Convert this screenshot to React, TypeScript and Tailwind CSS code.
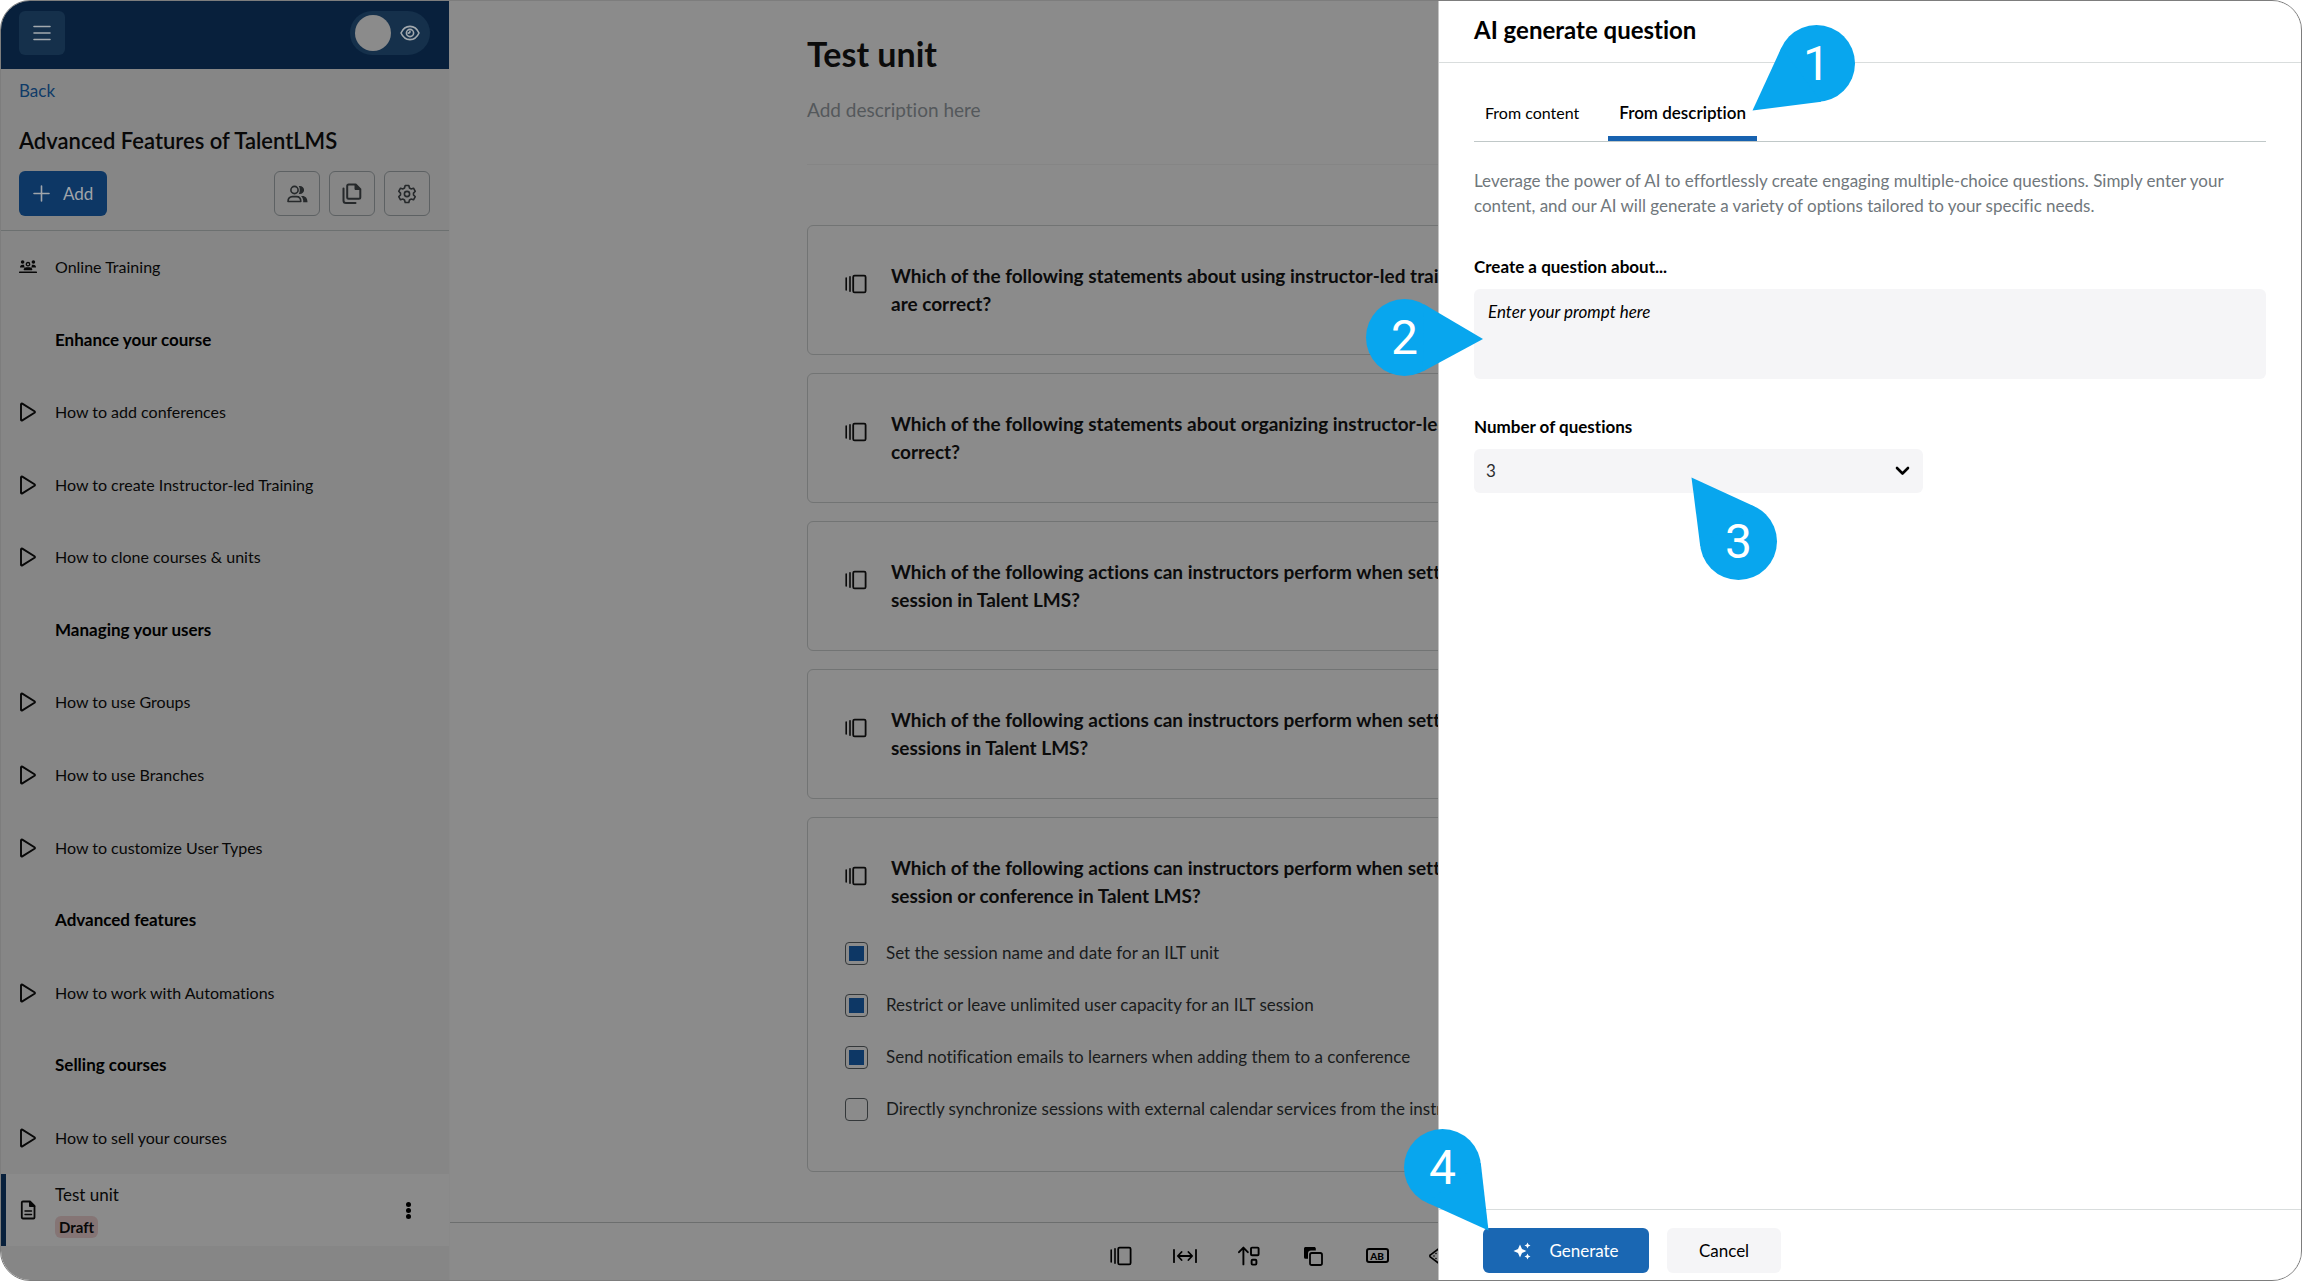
import React, { useState } from "react";

type IconProps = { children: React.ReactNode; w?: number; h?: number; sw?: number };

function Icon({ children, w = 22, h = 20, sw = 1.6 }: IconProps) {
  return (
    <svg
      aria-hidden="true"
      width={w}
      height={h}
      viewBox={`0 0 ${w} ${h}`}
      fill="none"
      stroke="currentColor"
      strokeWidth={sw}
      strokeLinecap="round"
      strokeLinejoin="round"
      className="shrink-0"
    >
      {children}
    </svg>
  );
}

const CardsIcon = () => (
  <Icon>
    <path d="M1.2 4v12M5 2.8v14.4" strokeWidth="1.6" />
    <rect x="8.2" y="1.6" width="12.4" height="16.8" rx="1.4" strokeWidth="1.8" />
  </Icon>
);

const GapIcon = () => (
  <Icon w={24} sw={1.8}>
    <path d="M1 3.8v12.4M23 3.8v12.4M5 10h14M8.6 6 4.8 10l3.8 4M15.4 6l3.8 4-3.8 4" />
  </Icon>
);

const OrderIcon = () => (
  <Icon>
    <path d="M5.4 18.4V2M1 6.2 5.4 1.6l4.4 4.6" strokeWidth="1.9" />
    <rect x="13" y="1.6" width="7.6" height="7.6" rx="1" strokeWidth="1.9" />
    <rect x="13.6" y="13.8" width="4.8" height="4.8" rx="1" strokeWidth="1.9" />
  </Icon>
);

const MatchIcon = () => (
  <Icon w={20}>
    <path
      d="M2.6 1h8.6c.9 0 1.6.7 1.6 1.6v1.8H8a3 3 0 0 0-3 3v5.4H2.6A1.6 1.6 0 0 1 1 11.2V2.6C1 1.7 1.7 1 2.6 1Z"
      fill="currentColor"
      stroke="none"
    />
    <rect x="7" y="7" width="12" height="12" rx="1.8" strokeWidth="1.8" />
  </Icon>
);

const FreeTextIcon = () => (
  <span className="flex h-[15px] w-[23px] items-center justify-center rounded-[3px] border-2 border-current text-[10px] leading-none font-black">
    AB
  </span>
);

const LikertIcon = () => (
  <Icon w={24}>
    <path d="M12 1 23 10 12 19 1.5 11.2a1.4 1.4 0 0 1 0-2.4Z" />
    <path d="M7 7.5v.01M7 12.5v.01M5 10h.01M10 10h.01" />
  </Icon>
);

const PlayIcon = () => (
  <Icon w={18} h={20} sw={1.9}>
    <path d="M2 2.3v15.4c0 .7.7 1 1.3.7l12.2-7.6c.6-.4.6-1.2 0-1.6L3.3 1.6C2.7 1.3 2 1.6 2 2.3Z" />
  </Icon>
);

const ClassIcon = () => (
  <Icon w={18} h={14}>
    <g fill="currentColor" stroke="none">
      <circle cx="3.6" cy="2" r="1.8" />
      <circle cx="14.4" cy="2" r="1.8" />
      <path d="M1 7.4C1 5.7 2 4.7 3.7 4.7h1.5c-.3 1 .1 2 .7 2.7ZM17 7.4c0-1.7-1-2.7-2.7-2.7h-1.5c.3 1-.1 2-.7 2.7Z" />
      <rect x="0" y="11.6" width="18" height="1.5" rx=".6" />
    </g>
    <circle cx="9" cy="4.2" r="1.7" strokeWidth="1.3" />
    <path d="M5.3 9.5c.2-1 .9-1.5 2-1.5h3.4c1.1 0 1.8.5 2 1.5Z" strokeWidth="1.3" />
  </Icon>
);

const DocIcon = () => (
  <Icon w={16} h={20} sw={1.8}>
    <path d="M3 1.5h7L14.500 6v11.500c0 .6-.4 1-1 1H3a1.200 1.200 0 0 1-1.200-1V2.500c0-.6.5-1 1.200-1Z" />
    <path d="M9.500 1.500V6.500h5Z" fill="currentColor" strokeWidth="1" />
    <path d="M5 11h6.500M5 14.500h6.500" strokeWidth="1.4" />
  </Icon>
);

const UsersIcon = () => (
  <Icon w={21} h={18}>
    <circle cx="7.500" cy="5" r="3.600" />
    <path d="M1 16.500c0-3.200 1.800-4.900 4.300-4.900h4.200c2.500 0 4.300 1.700 4.300 4.900Z" />
    <g fill="currentColor" stroke="none">
      <path d="M11.800 1.100c3-.5 5.300 1.300 5.300 3.900s-2.300 4.400-5.300 3.900c1.400-2.200 1.400-5.600 0-7.800Z" />
      <path d="M14 11h1.400c3.100 0 5.100 2.200 5.100 6.200h-4.300c.2-2.600-.5-4.800-2.200-6.200Z" />
    </g>
  </Icon>
);

const FilesIcon = () => (
  <Icon w={20} h={22} sw={2}>
    <path d="M6.700 1.500h7l4.600 4.600v8.200c0 .9-.6 1.500-1.500 1.500H6.700c-.9 0-1.500-.6-1.500-1.500V3c0-.9.6-1.500 1.500-1.500Z" />
    <path d="M13 1.500v5h5Z" fill="currentColor" strokeWidth="1" />
    <path d="M1.500 5.500v12c0 1.500 1 2.500 2.500 2.500h9.500" />
  </Icon>
);

const GearIcon = () => (
  <Icon w={20} h={20}>
    <path d="M8.200 1.500h3.600l.7 2.500 1.500.9 2.500-.7 1.800 3.100-1.800 1.800v1.800l1.800 1.800-1.800 3.100-2.500-.7-1.500.9-.7 2.500H8.200L7.500 16 6 15.100l-2.500.7-1.800-3.100 1.800-1.800V9.100L1.700 7.300l1.800-3.100 2.500.7L7.500 4Z" />
    <circle cx="10" cy="10" r="2.600" />
  </Icon>
);

const EyeIcon = () => (
  <Icon w={20} h={16}>
    <path d="M1 8c1.800-4 5-6.600 9-6.600S17.200 4 19 8c-1.800 4-5 6.600-9 6.600S2.800 12 1 8Z" />
    <circle cx="10" cy="8" r="3.600" />
    <path d="M10 6.200c0 1.200-.8 1.900-1.800 1.900" />
  </Icon>
);

const SparkleIcon = () => (
  <Icon w={18} h={18}>
    <g fill="currentColor" stroke="none">
      <path d="M7 2.500 9 7l4.500 2L9 11l-2 4.500L5 11 .5 9 5 7Z" />
      <path d="m14.500.5.900 2.100 2.100.9-2.100.9-.9 2.100-.9-2.100-2.100-.9 2.100-.9ZM14.500 11.500l.9 2.100 2.100.9-2.100.9-.9 2.100-.9-2.100-2.100-.9 2.100-.9Z" />
    </g>
  </Icon>
);

/* Numbered marker: a disc with a tail drawn from its edge to the pointed-at spot. */
function Callout({ n, tail, place }: { n: number; tail: string; place: string }) {
  return (
    <div className={`absolute z-20 size-[77px] rounded-full bg-[#08a6ee] ${place}`}>
      <svg aria-hidden="true" viewBox="0 0 77 77" className="absolute inset-0 size-full overflow-visible">
        <polygon points={tail} fill="#08a6ee" />
      </svg>
      <span className="relative flex size-full items-center justify-center font-[Roboto,sans-serif] text-5xl text-white">
        {n}
      </span>
    </div>
  );
}

const UNITS: { kind: "class" | "head" | "play"; title: string }[] = [
  { kind: "class", title: "Online Training" },
  { kind: "head", title: "Enhance your course" },
  { kind: "play", title: "How to add conferences" },
  { kind: "play", title: "How to create Instructor-led Training" },
  { kind: "play", title: "How to clone courses & units" },
  { kind: "head", title: "Managing your users" },
  { kind: "play", title: "How to use Groups" },
  { kind: "play", title: "How to use Branches" },
  { kind: "play", title: "How to customize User Types" },
  { kind: "head", title: "Advanced features" },
  { kind: "play", title: "How to work with Automations" },
  { kind: "head", title: "Selling courses" },
  { kind: "play", title: "How to sell your courses" },
];

const QUESTIONS: [string, string][] = [
  ["Which of the following statements about using instructor-led training", "are correct?"],
  ["Which of the following statements about organizing instructor-led", "correct?"],
  ["Which of the following actions can instructors perform when setting", "session in Talent LMS?"],
  ["Which of the following actions can instructors perform when setting", "sessions in Talent LMS?"],
  ["Which of the following actions can instructors perform when setting", "session or conference in Talent LMS?"],
];

const OPTIONS = [
  { text: "Set the session name and date for an ILT unit", on: true },
  { text: "Restrict or leave unlimited user capacity for an ILT session", on: true },
  { text: "Send notification emails to learners when adding them to a conference", on: true },
  { text: "Directly synchronize sessions with external calendar services from the instructor", on: false },
];

const TOOLS = [
  { label: "Multiple choice", icon: <CardsIcon /> },
  { label: "Fill the gap", icon: <GapIcon /> },
  { label: "Ordering", icon: <OrderIcon /> },
  { label: "Drag and drop", icon: <MatchIcon /> },
  { label: "Free text", icon: <FreeTextIcon /> },
  { label: "Randomized", icon: <LikertIcon /> },
];

function Sidebar() {
  return (
    <aside className="flex w-[449px] shrink-0 flex-col border-r border-[#898989] bg-[#868686] text-[#080808]">
      <header className="flex h-[68px] shrink-0 items-center justify-between bg-[#08203c] pr-[19px] pb-1 pl-[18px] text-[#a3a9ae]">
        <button aria-label="Menu" className="flex h-11 w-[46px] items-center justify-center rounded-md bg-[#15304b]">
          <Icon w={18} h={16}>
            <path d="M1 1.500h16M1 8h16M1 14.500h16" />
          </Icon>
        </button>
        <button aria-label="Preview" className="flex h-11 w-20 items-center justify-between rounded-full bg-[#15304b] pr-[10px] pl-[5px]">
          <span className="size-9 rounded-full bg-[#8b8b8b]" />
          <EyeIcon />
        </button>
      </header>
      <div className="shrink-0 border-b border-[#6c7070] pt-[10px] pr-[19px] pb-[14px] pl-[18px]">
        <a href="#back" className="block text-[17px] leading-6 text-[#0f3b68]">Back</a>
        <h2 className="mt-[22px] text-[22px] leading-8 font-semibold">Advanced Features of TalentLMS</h2>
        <div className="mt-[14px] flex items-center gap-[9px]">
          <button className="mr-auto flex h-[45px] items-center gap-[13px] rounded-md bg-[#0d3765] px-[14px] text-[17px] text-[#a0a5aa]">
            <Icon w={17} h={17}>
              <path d="M8.500 1v15M1 8.500h15" />
            </Icon>
            Add
          </button>
          {[
            { l: "Users", i: <UsersIcon /> },
            { l: "Files", i: <FilesIcon /> },
            { l: "Settings", i: <GearIcon /> },
          ].map((b) => (
            <button key={b.l} aria-label={b.l} className="flex h-[45px] w-[46px] items-center justify-center rounded-md border border-[#5d6163] text-[#26292b]">
              {b.i}
            </button>
          ))}
        </div>
      </div>
      <ul className="flex flex-1 flex-col">
        {UNITS.map((u) => (
          <li key={u.title} className="flex flex-1 items-center px-[18px]">
            <span className="w-9 shrink-0">
              {u.kind === "play" && <PlayIcon />}
              {u.kind === "class" && <ClassIcon />}
            </span>
            <a href="#unit" className={u.kind === "head" ? "text-[17px] font-bold text-black" : "text-[16px]"}>{u.title}</a>
          </li>
        ))}
      </ul>
      <div className="mb-[34px] flex h-[72px] shrink-0 items-center border-l-[5px] border-[#08203c] bg-[#8b8b8b] pr-[38px] pl-[14px]">
        <span className="w-[35px] shrink-0">
          <DocIcon />
        </span>
        <div className="flex flex-col items-start gap-[9px]">
          <a href="#test-unit" className="text-[17px] leading-6">Test unit</a>
          <span className="rounded-md bg-[#857575] px-1 text-[15px] leading-[22px] font-bold">Draft</span>
        </div>
        <button aria-label="More options" className="ml-auto flex flex-col gap-px">
          <i className="size-[5px] rounded-full bg-black" />
          <i className="size-[5px] rounded-full bg-black" />
          <i className="size-[5px] rounded-full bg-black" />
        </button>
      </div>
    </aside>
  );
}

function Unit() {
  return (
    <main className="flex min-w-0 flex-1 flex-col bg-[#8b8b8b] text-[#0b0b0b]">
      <div className="mx-auto w-[1137px] max-w-full flex-1">
        <h1 className="pt-[31px] text-[34px] leading-[44px] font-bold">Test unit</h1>
        <p className="mt-5 border-b border-[#858585] pb-10 text-[19px] leading-7 text-[#54585b]">Add description here</p>
        <div className="mt-[60px] flex flex-col gap-[18px]">
          {QUESTIONS.map(([a, b], i) => (
            <section key={i} className="rounded-md border border-[#727474] py-9 pr-9 pl-[37px]">
              <div className="flex gap-6">
                <span className="mt-3 w-[22px]">
                  <CardsIcon />
                </span>
                <h3 className="text-[19px] leading-7 font-bold">
                  {a}
                  <br />
                  {b}
                </h3>
              </div>
              {i === QUESTIONS.length - 1 && (
                <div className="mt-[17px]">
                  {OPTIONS.map((o) => (
                    <label key={o.text} className="flex h-[52px] items-center gap-[18px] text-[17px] text-[#191b1c]">
                      <input
                        type="checkbox"
                        defaultChecked={o.on}
                        className="size-[23px] appearance-none rounded-[4px] border border-[#34383a] bg-clip-content p-[3px] checked:bg-[#0d3765]"
                      />
                      {o.text}
                    </label>
                  ))}
                </div>
              )}
            </section>
          ))}
        </div>
      </div>
      <nav className="flex h-[58px] shrink-0 items-center border-t border-[#6c6e6e] pt-2 pl-[639px] text-black">
        {TOOLS.map((t) => (
          <button key={t.label} aria-label={t.label} className="flex w-16 shrink-0 items-center justify-center">
            {t.icon}
          </button>
        ))}
      </nav>
    </main>
  );
}

function Panel() {
  const [tab, setTab] = useState(1);
  const tabs = ["From content", "From description"];
  return (
    <aside className="absolute inset-y-0 right-0 z-10 flex w-[863px] flex-col border-l border-[#c4c4c4] bg-white text-[17px] text-black">
      <header className="flex h-[62px] shrink-0 items-center border-b border-[#d9dddd] px-[35px] pb-1">
        <h2 className="text-[24px] leading-8 font-bold">AI generate question</h2>
      </header>
      <div className="flex-1 px-[35px] pt-[22px]">
        <div role="tablist" className="relative flex gap-[18px] border-b border-[#c0c8c8]">
          {tabs.map((t, i) => (
            <button
              key={t}
              role="tab"
              aria-selected={tab === i}
              onClick={() => setTab(i)}
              className={
                tab === i
                  ? "h-14 border-b-[5px] border-[#1762b0] px-[11px] pt-1 text-[17px] font-semibold"
                  : "h-14 border-b-[5px] border-transparent px-[11px] pt-1 text-[16px]"
              }
            >
              {t}
            </button>
          ))}
          <Callout n={1} tail="-25.5,85.5 3.5,22.5 43.3,76.7" place="-top-[60px] left-[304px]" />
        </div>
        <p className="mt-[26px] leading-[25px] text-[#70777c]">
          Leverage the power of AI to effortlessly create engaging multiple-choice questions. Simply enter your content,
          and our AI will generate a variety of options tailored to your specific needs.
        </p>
        <label htmlFor="prompt" className="mt-9 block text-[17px] leading-[25px] font-bold">
          Create a question about...
        </label>
        <div className="relative mt-[10px]">
          <textarea
            id="prompt"
            placeholder="Enter your prompt here"
            className="block h-[90px] w-full resize-none rounded-md bg-[#f5f5f7] px-[14px] py-[10px] leading-[25px] placeholder:text-black placeholder:italic"
          />
          <Callout n={2} tail="117,40 56.8,72.4 58,5.3" place="top-[10px] -left-[108px]" />
        </div>
        <label htmlFor="count" className="mt-[35px] block text-[17px] leading-[25px] font-bold">
          Number of questions
        </label>
        <div className="relative mt-[10px] w-[449px]">
          <select id="count" defaultValue="3" className="block h-11 w-full appearance-none rounded-md bg-[#f5f5f7] px-3 text-[#2b2d2f]">
            <option>1</option>
            <option>2</option>
            <option>3</option>
          </select>
          <span className="pointer-events-none absolute inset-y-0 right-[13px] flex items-center">
            <Icon w={15} h={10} sw={2.6}>
              <path d="m2 2 5.500 5.500L13 2" />
            </Icon>
          </span>
          <Callout n={3} tail="-8.5,-25.5 0.3,43.4 54.6,3.5" place="top-[54px] left-[226px]" />
        </div>
      </div>
      <footer className="relative flex h-[71px] shrink-0 gap-[18px] border-t border-[#d9dddd] pt-[18px] pl-[44px]">
        <button className="flex h-[45px] w-[166px] items-center justify-center gap-[18px] rounded-md bg-[#1a67b3] text-white">
          <SparkleIcon />
          Generate
        </button>
        <button className="h-[45px] w-[114px] rounded-md bg-[#f5f5f7]">Cancel</button>
        <Callout n={4} tail="84.5,101.5 22.7,73.6 76.8,34.1" place="-top-[81px] -left-[35px]" />
      </footer>
    </aside>
  );
}

export default function App() {
  return (
    <div className="bg-white">
      <div className="relative flex min-h-screen overflow-hidden rounded-[30px] border border-[#7d7d7d] font-[Lato,sans-serif] [font-variant-ligatures:none]">
        <Sidebar />
        <Unit />
        <Panel />
      </div>
    </div>
  );
}
